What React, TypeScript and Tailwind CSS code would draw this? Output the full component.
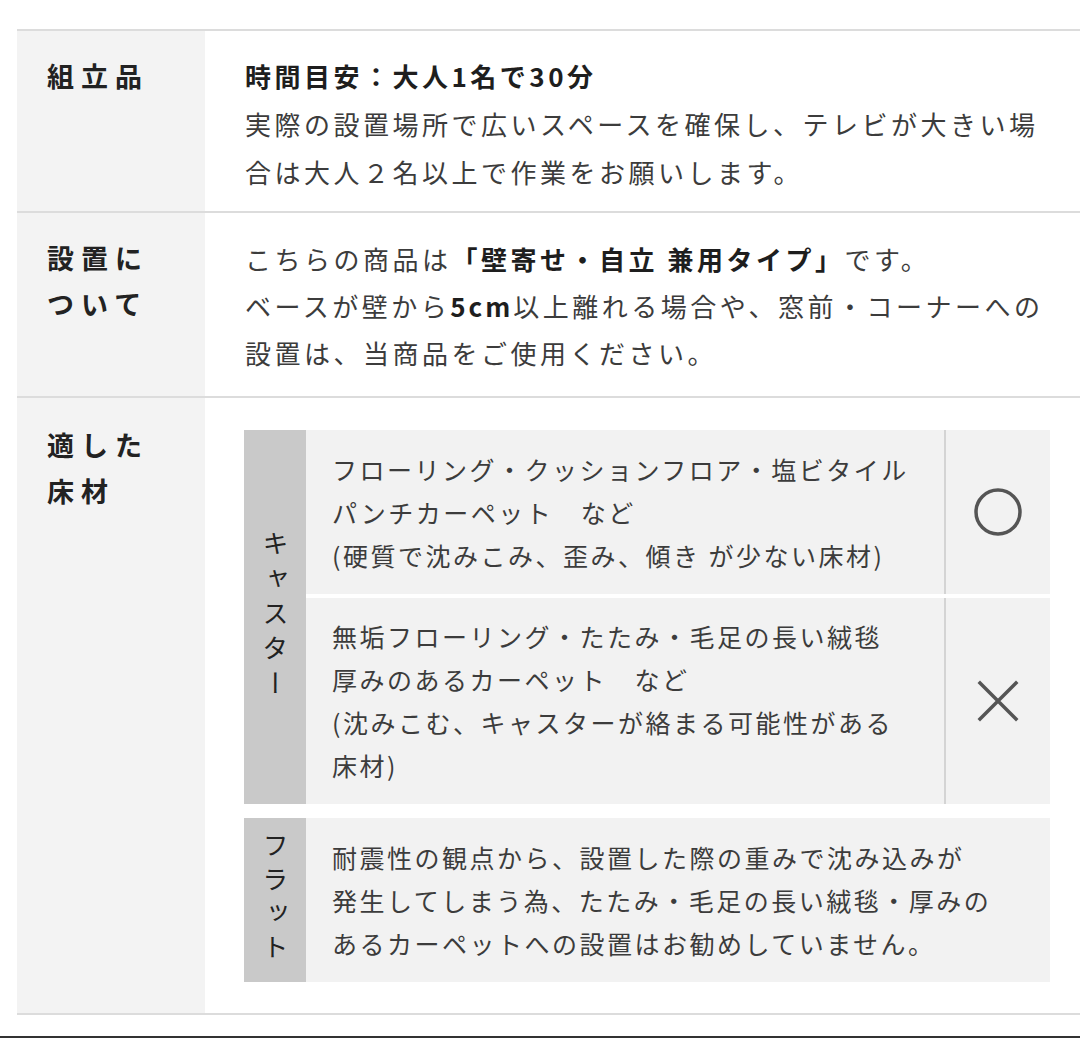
import React from 'react';

const font = "font-['Noto_Sans_CJK_JP','Noto_Sans',sans-serif]";

const Circle: React.FC = () => (
  <svg width="50" height="50" viewBox="0 0 50 50">
    <circle cx="25" cy="25" r="22" fill="none" stroke="#555" strokeWidth="3.5" />
  </svg>
);

const Cross: React.FC = () => (
  <svg width="42" height="42" viewBox="0 0 42 42">
    <path d="M3 3 L39 39 M39 3 L3 39" stroke="#555" strokeWidth="3.5" strokeLinecap="square" />
  </svg>
);

const Line: React.FC<{ children: React.ReactNode }> = ({ children }) => (
  <span className="block whitespace-nowrap">{children}</span>
);

const App: React.FC = () => {
  return (
    <div className={`${font} bg-white w-[1080px] h-[1038px] flex flex-col`}>
      <div className="h-[29px]" />
      <div className="ml-[17px] border-t-2 border-b-2 border-[#dcdcdc]">
        {/* 組立品 */}
        <div className="flex border-b-2 border-[#dcdcdc]">
          <div className="w-[188px] shrink-0 bg-[#f3f3f3] pl-[30px] pt-[21px] text-[27px] leading-[48px] font-bold tracking-[7px] text-[#222]">
            組立品
          </div>
          <div className="flex-1 pl-[40px] pt-[21px] pb-[15px] text-[26px] leading-[48px] tracking-[3.5px] text-[#3c3c3c]">
            <Line>
              <b className="text-[#1e1e1e]">時間目安：大人1名で30分</b>
            </Line>
            <Line>実際の設置場所で広いスペースを確保し、テレビが大きい場</Line>
            <Line>合は大人２名以上で作業をお願いします。</Line>
          </div>
        </div>

        {/* 設置について */}
        <div className="flex border-b-2 border-[#dcdcdc]">
          <div className="w-[188px] shrink-0 bg-[#f3f3f3] pl-[30px] pt-[22px] text-[27px] leading-[46px] font-bold tracking-[7px] text-[#222]">
            <Line>設置に</Line>
            <Line>ついて</Line>
          </div>
          <div className="flex-1 pl-[40px] pt-[22px] pb-[20px] text-[26px] leading-[47px] tracking-[3.5px] text-[#3c3c3c]">
            <Line>
              こちらの商品は<b className="text-[#1e1e1e]">「壁寄せ・自立 兼用タイプ」</b>です。
            </Line>
            <Line>
              ベースが壁から<b className="text-[#1e1e1e] tracking-[3px]">5cm</b>以上離れる場合や、窓前・コーナーへの
            </Line>
            <Line>設置は、当商品をご使用ください。</Line>
          </div>
        </div>

        {/* 適した床材 */}
        <div className="flex">
          <div className="w-[188px] shrink-0 bg-[#f3f3f3] pl-[30px] pt-[24px] text-[27px] leading-[46px] font-bold tracking-[7px] text-[#222]">
            <Line>適した</Line>
            <Line>床材</Line>
          </div>
          <div className="flex-1 pl-[39px] pr-[30px] pt-[32px] pb-[31px] text-[25px] leading-[43px] tracking-[2.5px] text-[#3c3c3c]">
            <div className="flex">
              <div className="w-[62px] shrink-0 bg-[#c9c9c9] flex items-center justify-center">
                <span className="[writing-mode:vertical-rl] text-[26px] tracking-[9px] leading-none text-[#222]">
                  キャスター
                </span>
              </div>
              <div className="flex-1 flex flex-col gap-[4px]">
                <div className="flex h-[164px] bg-[#f2f2f2]">
                  <div className="flex-1 pl-[26px] flex flex-col justify-center">
                    <Line>フローリング・クッションフロア・塩ビタイル</Line>
                    <Line>パンチカーペット　など</Line>
                    <Line>(硬質で沈みこみ、歪み、傾き が少ない床材)</Line>
                  </div>
                  <div className="w-[106px] shrink-0 border-l-2 border-[#d4d4d4] flex items-center justify-center">
                    <Circle />
                  </div>
                </div>
                <div className="flex h-[206px] bg-[#f2f2f2]">
                  <div className="flex-1 pl-[26px] flex flex-col justify-center">
                    <Line>無垢フローリング・たたみ・毛足の長い絨毯</Line>
                    <Line>厚みのあるカーペット　など</Line>
                    <Line>(沈みこむ、キャスターが絡まる可能性がある</Line>
                    <Line>床材)</Line>
                  </div>
                  <div className="w-[106px] shrink-0 border-l-2 border-[#d4d4d4] flex items-center justify-center">
                    <Cross />
                  </div>
                </div>
              </div>
            </div>

            <div className="flex mt-[14px] h-[164px]">
              <div className="w-[62px] shrink-0 bg-[#c9c9c9] flex items-center justify-center">
                <span className="[writing-mode:vertical-rl] text-[26px] tracking-[8px] leading-none text-[#222]">
                  フラット
                </span>
              </div>
              <div className="flex-1 bg-[#f2f2f2] pl-[26px] flex flex-col justify-center">
                <Line>耐震性の観点から、設置した際の重みで沈み込みが</Line>
                <Line>発生してしまう為、たたみ・毛足の長い絨毯・厚みの</Line>
                <Line>あるカーペットへの設置はお勧めしていません。</Line>
              </div>
            </div>
          </div>
        </div>
      </div>
      <div className="flex-1" />
      <div className="h-[2px] bg-[#333]" />
    </div>
  );
};

export default App;
